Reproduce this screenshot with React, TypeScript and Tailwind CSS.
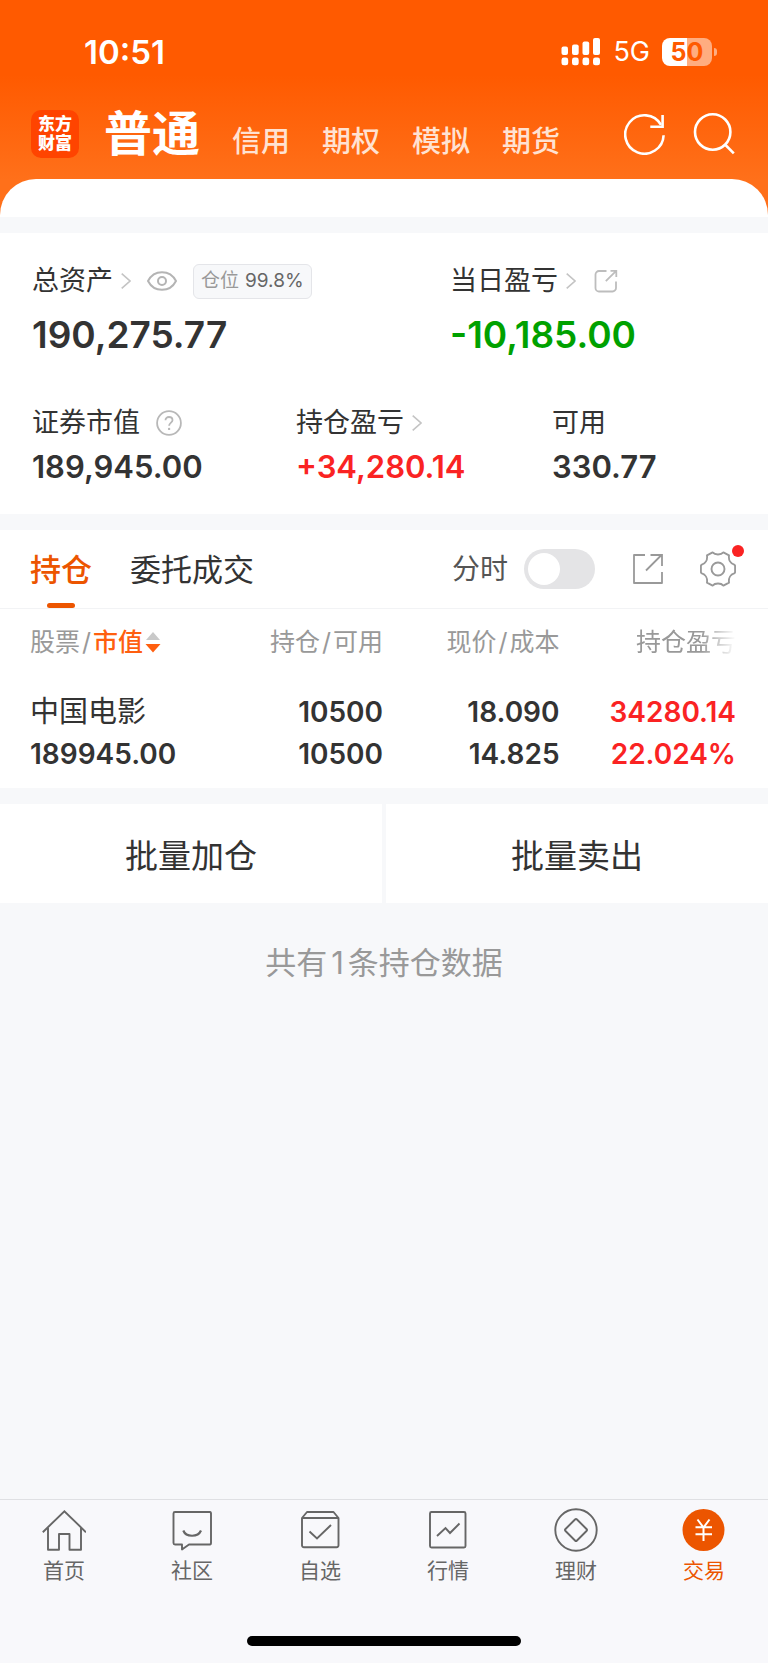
import type { ReactNode } from "react";

const accounts = ["信用", "期权", "模拟", "期货"];

const holdings = [
  {
    name: "中国电影",
    value: "189945.00",
    held: "10500",
    available: "10500",
    price: "18.090",
    cost: "14.825",
    profit: "34280.14",
    rate: "22.024%",
  },
];

function SignalIcon() {
  return (
    <svg width="40" height="28" viewBox="0 0 40 28" fill="#fff" aria-hidden="true">
      <rect x="0.5" y="8.500" width="6.500" height="8.500" rx="2" />
      <rect x="11" y="6.500" width="6.700" height="10.500" rx="2" />
      <rect x="21.5" y="3.500" width="6.700" height="13.500" rx="2" />
      <rect x="32" y="0" width="7" height="17" rx="2" />
      <rect x="0.5" y="19.500" width="6.700" height="7.800" rx="2.400" />
      <rect x="11" y="19.500" width="6.700" height="7.800" rx="2.400" />
      <rect x="21.5" y="19.500" width="6.700" height="7.800" rx="2.400" />
      <rect x="32" y="19.500" width="7" height="7.800" rx="2.400" />
    </svg>
  );
}

function RefreshIcon() {
  return (
    <svg width="42" height="42" viewBox="0 0 42 42" fill="none" stroke="#fff" strokeWidth="2.6" aria-hidden="true">
      <path d="M39.6 22.2A19.2 19.2 0 1 1 37 11.8" />
      <path d="M38.6 2V13.7H26.3" />
    </svg>
  );
}

function SearchIcon() {
  return (
    <svg width="42" height="42" viewBox="0 0 42 42" fill="none" stroke="#fff" strokeWidth="2.6" aria-hidden="true">
      <circle cx="19.7" cy="19" r="17.7" />
      <path d="M32 31.5L40.8 40.3" />
    </svg>
  );
}

function Chevron() {
  return (
    <svg width="10" height="16" viewBox="0 0 10 16" fill="none" stroke="#c4c4c4" strokeWidth="1.6" aria-hidden="true">
      <path d="M0.7 0.7L9 8L0.7 15.3" />
    </svg>
  );
}

function EyeIcon() {
  return (
    <svg width="30" height="20" viewBox="0 0 30 20" fill="none" stroke="#b4b4b4" strokeWidth="2" aria-hidden="true">
      <path d="M1 10C4 4.2 9 1.2 15 1.2S26 4.2 29 10C26 15.800 21 18.800 15 18.800S4 15.800 1 10Z" strokeLinejoin="round" />
      <circle cx="15" cy="10" r="4" />
    </svg>
  );
}

function ShareRoundedIcon() {
  return (
    <svg width="24" height="24" viewBox="0 0 24 24" fill="none" stroke="#bdbdbd" strokeWidth="1.8" aria-hidden="true">
      <path d="M12.500 2H5A3.500 3.500 0 0 0 1.500 5.500V19A3.500 3.500 0 0 0 5 22.500H18.500A3.500 3.500 0 0 0 22 19V12.500" />
      <path d="M11.800 12.200L22.200 1.900M16.500 1.900H22.300V8" />
    </svg>
  );
}

function ShareSquareIcon() {
  return (
    <svg width="32" height="32" viewBox="0 0 32 32" fill="none" stroke="#999" strokeWidth="1.800" aria-hidden="true">
      <path d="M13 2H2V30H30V19" strokeLinejoin="round" />
      <path d="M14 17.500L29.500 2M18.500 2H30V13" />
    </svg>
  );
}

function HelpIcon() {
  return (
    <svg width="26" height="26" viewBox="0 0 26 26" fill="none" stroke="#b8b8b8" strokeWidth="1.800" aria-hidden="true">
      <circle cx="13" cy="13" r="11.900" />
      <path d="M9.500 10.300C9.500 8.200 11 7 13 7S16.500 8.300 16.500 10.200C16.500 12.500 13.100 12.800 13.100 15.800" />
      <circle cx="13.100" cy="18.900" r="1.200" fill="#b8b8b8" stroke="none" />
    </svg>
  );
}

function GearIcon() {
  return (
    <svg width="36" height="36" viewBox="0 0 36 36" fill="none" stroke="#999" strokeWidth="1.900" strokeLinejoin="round" aria-hidden="true">
      <path d="M12.600 1.400C15 4.200 21 4.200 23.400 1.400L29 4.400C28.400 8.800 30.600 12.600 34.200 13.600Q35.100 14 35.100 15V21Q35.100 22 34.200 22.400C30.600 23.400 28.400 27.200 29 31.600L23.400 34.600C21 31.800 15 31.800 12.600 34.600L7 31.600C7.600 27.200 5.400 23.400 1.800 22.400Q0.900 22 0.900 21V15Q0.900 14 1.800 13.600C5.400 12.600 7.600 8.800 7 4.400Z" />
      <circle cx="18" cy="18" r="6.500" />
    </svg>
  );
}

function NavGlyph({ children }: { children: ReactNode }) {
  return (
    <svg width="44" height="44" viewBox="0 0 44 44" fill="none" stroke="#666" strokeWidth="1.900" aria-hidden="true">
      {children}
    </svg>
  );
}

const navItems: { label: string; active?: boolean; icon: ReactNode }[] = [
  {
    label: "首页",
    icon: (
      <>
        <path d="M0.800 24.200L22.400 3.200L44 24.200" />
        <path d="M6 20V41.800H17V26H27.500V41.800H39V20" strokeLinejoin="round" />
      </>
    ),
  },
  {
    label: "社区",
    icon: (
      <>
        <path d="M5 4H40A1.500 1.500 0 0 1 41 5.500V35A1.500 1.500 0 0 1 40 36.500H19L12 41.500V36.500H5A1.500 1.500 0 0 1 3.500 35V5.500A1.500 1.500 0 0 1 5 4Z" strokeLinejoin="round" />
        <path d="M13.300 22.500C16 29.500 28 29.500 31 22.500" strokeWidth="2.200" />
      </>
    ),
  },
  {
    label: "自选",
    icon: (
      <>
        <path d="M4 10L9 4H35.500L40.500 10V37A2 2 0 0 1 38.500 39.300H6A2 2 0 0 1 4 37V10ZM4 10H40.500" strokeLinejoin="round" />
        <path d="M11.500 23.500L19 30.500L33 17" />
      </>
    ),
  },
  {
    label: "行情",
    icon: (
      <>
        <rect x="4" y="4" width="35.500" height="35.500" rx="1.500" />
        <path d="M11 28L19.500 20L24 25L33.500 15.500" />
      </>
    ),
  },
  {
    label: "理财",
    icon: (
      <>
        <circle cx="22" cy="22" r="20.700" />
        <path d="M21 11.500Q22 10.500 23 11.500L32.500 21Q33.500 22 32.500 23L23 32.500Q22 33.500 21 32.500L11.500 23Q10.500 22 11.500 21Z" />
      </>
    ),
  },
  {
    label: "交易",
    active: true,
    icon: (
      <>
        <circle cx="21.500" cy="22" r="21" fill="#ec5500" stroke="none" />
        <path d="M15.500 11.500L21.500 19.500L27.500 11.500M21.500 19.500V33M13.500 19.300H30M13.500 26.300H30" stroke="#fff" strokeWidth="2" />
      </>
    ),
  },
];

function StatusBar() {
  return (
    <div className="flex h-[103px] items-center justify-between pr-[51px] pl-[84px] text-white">
      <time className="text-[33px] leading-10 font-semibold">10:51</time>
      <div className="flex items-center">
        <SignalIcon />
        <span className="ml-3 text-[27px] leading-8">5G</span>
        <span className="ml-3 flex h-7 w-[50px] items-center justify-center rounded-lg bg-[linear-gradient(to_right,#fff_50%,#ffad80_50%)] text-[25px] leading-7 font-bold text-[#ff5a00]">
          50
        </span>
        <span className="ml-0.5 h-2 w-[3px] rounded-r-full bg-[#ffad80]" />
      </div>
    </div>
  );
}

function Header() {
  return (
    <header className="bg-[linear-gradient(to_bottom,#ff5a00_0px,#ff5a00_75px,#ff701a_180px)]">
      <StatusBar />
      <div className="flex h-[76px] items-start pt-[7px] pr-[33px] pl-[31px] text-white">
        <div className="flex h-12 w-12 flex-col items-center justify-center rounded-[10px] bg-[#ff4400] text-[17px] leading-[19px] font-black">
          <span>东方</span>
          <span>财富</span>
        </div>
        <nav className="ml-[25px] flex flex-1 items-end gap-8 text-[29px] leading-8 font-medium text-[#ffe2d2]">
          <a href="#normal" className="text-5xl leading-12 font-bold text-white">普通</a>
          {accounts.map((name) => (
            <a key={name} href={`#${name}`}>{name}</a>
          ))}
        </nav>
        <div className="flex gap-[27px] pt-[3px]">
          <button type="button" aria-label="刷新"><RefreshIcon /></button>
          <button type="button" aria-label="搜索"><SearchIcon /></button>
        </div>
      </div>
    </header>
  );
}

function AssetSummary() {
  return (
    <section className="bg-white px-8 pt-[30px] pb-[29px]">
      <div className="grid grid-cols-[418fr_286fr]">
        <div>
          <div className="flex h-9 items-center">
            <a href="#assets" className="flex items-center gap-2 text-[27px] leading-9">总资产<Chevron /></a>
            <button type="button" aria-label="隐藏金额" className="ml-4"><EyeIcon /></button>
            <span className="ml-4 flex h-[35px] items-center gap-1.5 rounded-md border border-[#e4e5e9] bg-[#f7f8fa] px-[7px] text-[19px] leading-6 text-[#999]">
              仓位<span className="text-[#666]">99.8%</span>
            </span>
          </div>
          <p className="mt-3.5 text-[37px] leading-11 font-semibold">190,275.77</p>
        </div>
        <div>
          <div className="flex h-9 items-center">
            <a href="#today" className="flex items-center gap-2 text-[27px] leading-9">当日盈亏<Chevron /></a>
            <button type="button" aria-label="分享当日盈亏" className="ml-[18px]"><ShareRoundedIcon /></button>
          </div>
          <p className="mt-3.5 text-[37px] leading-11 font-semibold text-[#00a100]">-10,185.00</p>
        </div>
      </div>
      <div className="mt-12 grid grid-cols-[264fr_256fr_184fr]">
        <div>
          <div className="flex h-9 items-center gap-4 text-[27px]">
            证券市值
            <button type="button" aria-label="说明"><HelpIcon /></button>
          </div>
          <p className="mt-2 text-[31px] leading-9 font-semibold">189,945.00</p>
        </div>
        <div>
          <a href="#profit" className="flex h-9 items-center gap-2 text-[27px]">持仓盈亏<Chevron /></a>
          <p className="mt-2 text-[31px] leading-9 font-semibold text-[#fa2323]">+34,280.14</p>
        </div>
        <div>
          <div className="flex h-9 items-center text-[27px]">可用</div>
          <p className="mt-2 text-[31px] leading-9 font-semibold">330.77</p>
        </div>
      </div>
    </section>
  );
}

function Holdings() {
  return (
    <section className="bg-white">
      <div className="flex h-[79px] items-stretch border-b border-[#f2f3f5] pr-8 pl-[30px]">
        <div role="tablist" className="flex flex-1 gap-[38px] text-[31px] leading-10">
          <button type="button" role="tab" aria-selected="true" className="flex flex-col items-center justify-between pt-5 font-medium text-[#ec5500]">
            持仓
            <span className="h-[5px] w-7 rounded-full bg-[#ec5500]" />
          </button>
          <button type="button" role="tab" aria-selected="false" className="flex pt-5">委托成交</button>
        </div>
        <div className="flex items-center">
          <label className="flex items-center gap-4 text-[28px] leading-9 text-[#555]">
            分时
            <input
              type="checkbox"
              role="switch"
              className="h-10 w-[71px] appearance-none rounded-full bg-[#e4e4e6] p-1 before:block before:size-8 before:rounded-full before:bg-white checked:bg-[#ec5500] checked:before:ml-auto"
            />
          </label>
          <button type="button" aria-label="分享持仓" className="ml-[37px]"><ShareSquareIcon /></button>
          <button type="button" aria-label="设置" className="relative ml-9">
            <GearIcon />
            <span className="absolute -top-1.5 -right-2 size-3 rounded-full bg-[#fa2323]" />
          </button>
        </div>
      </div>
      <div className="pr-8 pb-[13px] pl-[30px]">
        <table className="w-full table-fixed">
          <thead>
            <tr className="h-[65px] text-right text-[25px] leading-8 whitespace-nowrap text-[#999]">
              <th scope="col" className="text-left font-normal">
                <button type="button" className="flex items-center">
                  股票<span className="mx-0.5">/</span>
                  <span className="font-medium text-[#ff5f0f]">市值</span>
                  <svg className="ml-0.5" width="16" height="22" viewBox="0 0 16 22" aria-hidden="true">
                    <path d="M1 9L8 1L15 9Z" fill="#c9c9c9" />
                    <path d="M0.500 13H15.500L8 21.500Z" fill="#ff5f0f" />
                  </svg>
                </button>
              </th>
              <th scope="col" className="font-normal">持仓<span className="mx-0.5">/</span>可用</th>
              <th scope="col" className="font-normal">现价<span className="mx-0.5">/</span>成本</th>
              <th scope="col" className="font-normal [mask-image:linear-gradient(to_right,#000_80%,transparent)]">持仓盈亏</th>
            </tr>
          </thead>
          <tbody className="text-right text-[28px] leading-[42px] font-semibold">
            {holdings.map((h) => (
              <tr key={h.name} className="align-bottom">
                <td className="pt-[17px] text-left">
                  <div className="text-[29px] font-normal">{h.name}</div>
                  <div>{h.value}</div>
                </td>
                <td><div>{h.held}</div><div>{h.available}</div></td>
                <td><div>{h.price}</div><div>{h.cost}</div></td>
                <td className="text-[#fa2323]"><div>{h.profit}</div><div>{h.rate}</div></td>
              </tr>
            ))}
          </tbody>
        </table>
      </div>
    </section>
  );
}

function BottomNav() {
  return (
    <footer className="border-t border-[#dfe0e3] bg-[#f8f8fb]">
      <nav className="grid grid-cols-6 pt-2 text-[21px] leading-7 text-[#666]">
        {navItems.map((item) => (
          <a
            key={item.label}
            href={`#${item.label}`}
            aria-current={item.active ? "page" : undefined}
            className="flex flex-col items-center gap-[5px] aria-[current=page]:text-[#ec5500]"
          >
            <NavGlyph>{item.icon}</NavGlyph>
            {item.label}
          </a>
        ))}
      </nav>
      <div className="mx-auto mt-[51px] mb-[17px] h-2.5 w-[274px] rounded-full bg-black" />
    </footer>
  );
}

export default function App() {
  return (
    <div className="flex min-h-screen flex-col bg-[#f7f8fa] font-['Inter','Noto_Sans_CJK_SC',sans-serif] text-[#333]">
      <Header />
      <div className="bg-[#ff701a]">
        <div className="overflow-hidden rounded-t-[36px] bg-[#f7f8fa]">
          <div className="h-[38px] bg-white" />
        </div>
      </div>
      <main className="flex flex-1 flex-col gap-4 pt-4">
        <AssetSummary />
        <Holdings />
        <div className="grid grid-cols-2 gap-1 text-[33px] leading-10">
          <button type="button" className="h-[99px] bg-white pt-1">批量加仓</button>
          <button type="button" className="h-[99px] bg-white pt-1">批量卖出</button>
        </div>
        <p className="mt-6 text-center text-[31px] leading-10 text-[#999]">
          共有<span className="mx-1">1</span>条持仓数据
        </p>
      </main>
      <BottomNav />
    </div>
  );
}
